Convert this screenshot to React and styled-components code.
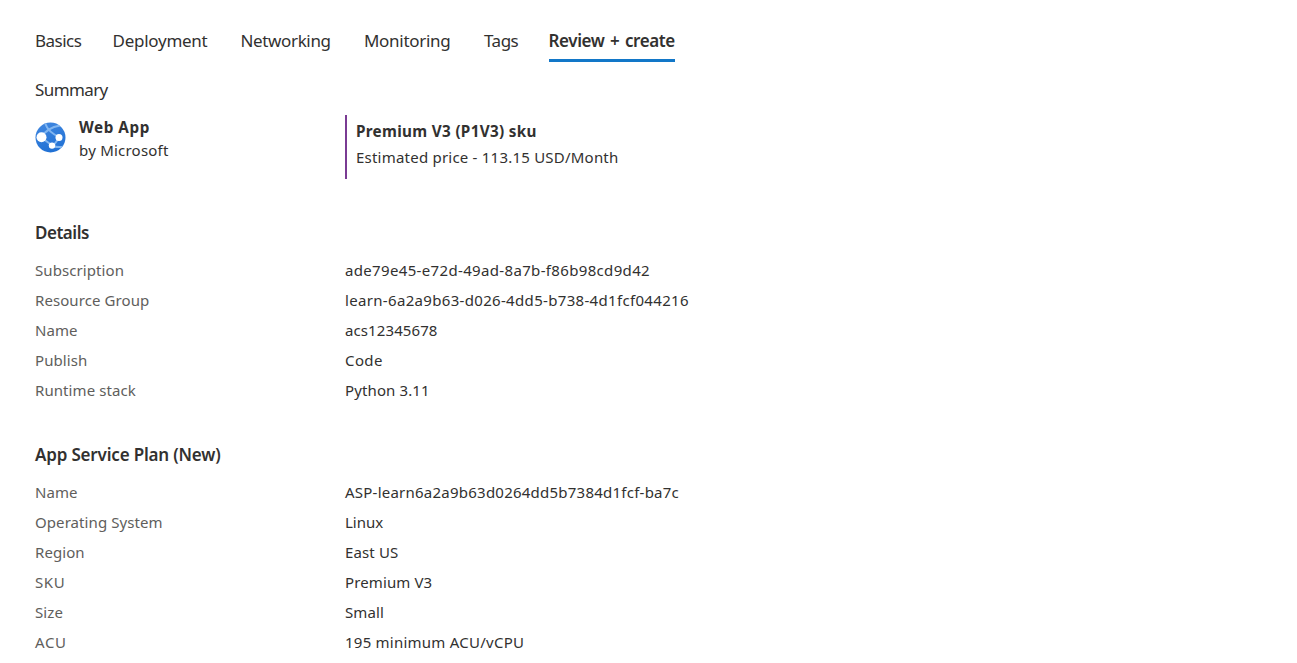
import React from "react";
import styled, { createGlobalStyle } from "styled-components";

const GlobalStyle = createGlobalStyle`
  * { box-sizing: border-box; }
  body {
    margin: 0;
    background: #fff;
    color: #323130;
    font-family: "Noto Sans", "Open Sans", sans-serif;
    font-size: 15px;
    font-weight: 400;
    overflow: hidden;
  }
`;

const Page = styled.main`
  height: 663px;
  padding: 29px 0 0 35px;
  overflow: hidden;
`;

const TabBar = styled.nav`
  display: flex;
  height: 33px;
`;

const Tab = styled.a`
  width: ${(p) => p.$width}px;
  margin-right: ${(p) => p.$gap}px;
  height: 33px;
  font-size: 17px;
  line-height: 24px;
  white-space: nowrap;
  letter-spacing: ${(p) => p.$track}px;
  word-spacing: ${(p) => (p.$active ? 1.5 : 0)}px;
  font-weight: ${(p) => (p.$active ? 600 : 400)};
  border-bottom: 3px solid ${(p) => (p.$active ? "#1277c8" : "transparent")};
`;

const SummaryTitle = styled.h2`
  margin: 16px 0 0;
  font-size: 17px;
  font-weight: 400;
  line-height: 24px;
  letter-spacing: -0.6px;
`;

const SummaryRow = styled.div`
  display: grid;
  grid-template-columns: 310px 1fr;
  height: 64px;
  margin: 13px 0 42px;
`;

const Product = styled.div`
  display: flex;
  gap: 13px;
  padding-top: 1px;

  svg {
    width: 31px;
    height: 31px;
    margin-top: 5.5px;
    flex: none;
  }
`;

const Line = styled.div`
  white-space: nowrap;
  height: ${(p) => p.$height}px;
  line-height: ${(p) => p.$height}px;
  font-size: ${(p) => (p.$bold ? 15.25 : 15)}px;
  font-weight: ${(p) => (p.$bold ? 700 : 400)};
  letter-spacing: ${(p) => p.$track}px;
`;

const Price = styled.div`
  border-left: 2px solid #7a3b93;
  padding: 3px 0 0 9px;
`;

const Section = styled.section`
  margin-bottom: 38px;
`;

const SectionTitle = styled.h3`
  margin: 0 0 10px;
  font-size: 17px;
  font-weight: 600;
  line-height: 24px;
  letter-spacing: ${(p) => p.$track}px;
`;

const Row = styled.div`
  display: grid;
  grid-template-columns: 310px 1fr;
  height: 30px;
  line-height: 30px;
  white-space: nowrap;
`;

const Label = styled.span`
  color: #605e5c;
  letter-spacing: ${(p) => p.$track}px;
`;

const Value = styled.span`
  letter-spacing: ${(p) => p.$track}px;
`;

const tabs = [
  { text: "Basics", width: 47, gap: 30.5, track: -0.5 },
  { text: "Deployment", width: 96, gap: 32, track: -0.26 },
  { text: "Networking", width: 91, gap: 32.5, track: -0.36 },
  { text: "Monitoring", width: 88, gap: 32, track: -0.3 },
  { text: "Tags", width: 35, gap: 29.5, track: -0.5 },
  { text: "Review + create", width: 126, gap: 0, track: -0.39, active: true },
];

const sections = [
  {
    title: "Details",
    track: -0.48,
    rows: [
      ["Subscription", "ade79e45-e72d-49ad-8a7b-f86b98cd9d42", 0.34],
      ["Resource Group", "learn-6a2a9b63-d026-4dd5-b738-4d1fcf044216", 0.325],
      ["Name", "acs12345678", 0.1],
      ["Publish", "Code", 0.4],
      ["Runtime stack", "Python 3.11", 0.12],
    ],
  },
  {
    title: "App Service Plan (New)",
    track: -0.18,
    rows: [
      ["Name", "ASP-learn6a2a9b63d0264dd5b7384d1fcf-ba7c", 0.235],
      ["Operating System", "Linux", 0],
      ["Region", "East US", 0.14],
      ["SKU", "Premium V3", 0.12],
      ["Size", "Small", 0.1],
      ["ACU", "195 minimum ACU/vCPU", 0.24],
    ],
  },
];

function WebAppIcon() {
  return (
    <svg viewBox="0 0 31 31" aria-hidden="true">
      <defs>
        <linearGradient id="globe" x1="0.3" y1="0" x2="0.6" y2="1">
          <stop offset="0" stopColor="#3f86df" />
          <stop offset="1" stopColor="#1f70d4" />
        </linearGradient>
        <clipPath id="disc">
          <circle cx="15.5" cy="15.5" r="15" />
        </clipPath>
      </defs>
      <circle cx="15.5" cy="15.5" r="15" fill="url(#globe)" />
      <g clipPath="url(#disc)" fill="none" stroke="#82b6f0" strokeWidth="2">
        <path d="M6 15.5C10 9 16 5 25 3.5" />
        <path d="M10 1c2 6 7 11 15 14.5" />
        <path d="M7 16l11 8L24 16" />
        <path d="M18 24c4 1.5 7 1.5 11 .5" />
      </g>
      <circle cx="6.5" cy="15.3" r="5" fill="#fff" />
      <circle cx="24" cy="15.5" r="3.5" fill="#fff" />
      <circle cx="17" cy="23.6" r="3.2" fill="#fff" />
    </svg>
  );
}

export default function App() {
  return (
    <>
      <GlobalStyle />
      <Page>
        <TabBar>
          {tabs.map((t) => (
            <Tab key={t.text} $width={t.width} $gap={t.gap} $track={t.track} $active={t.active}>
              {t.text}
            </Tab>
          ))}
        </TabBar>
        <SummaryTitle>Summary</SummaryTitle>
        <SummaryRow>
          <Product>
            <WebAppIcon />
            <div>
              <Line $bold $height={23} $track={0.55}>Web App</Line>
              <Line $height={23} $track={0.22}>by Microsoft</Line>
            </div>
          </Product>
          <Price>
            <Line $bold $height={26} $track={0.32}>Premium V3 (P1V3) sku</Line>
            <Line $height={26} $track={0.22}>Estimated price - 113.15 USD/Month</Line>
          </Price>
        </SummaryRow>
        {sections.map((s) => (
          <Section key={s.title}>
            <SectionTitle $track={s.track}>{s.title}</SectionTitle>
            {s.rows.map(([label, value, track]) => (
              <Row key={label}>
                <Label $track={label.length === 3 ? 0.6 : 0.08}>{label}</Label>
                <Value $track={track}>{value}</Value>
              </Row>
            ))}
          </Section>
        ))}
      </Page>
    </>
  );
}
